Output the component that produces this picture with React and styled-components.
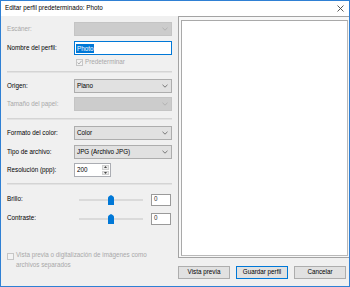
import React from 'react';
import styled, { createGlobalStyle } from 'styled-components';

const Global = createGlobalStyle`
  html, body { margin: 0; padding: 0; background: #ffffff; }
  body { font-family: "Liberation Sans", Arial, sans-serif; }
  * { box-sizing: border-box; }
`;

const Window = styled.div`
  width: 350px;
  height: 287px;
  border: 1px solid #2f80d4;
  display: flex;
  flex-direction: column;
  background: #f0f0f0;
  font-size: 6.3px;
  color: #000;
  overflow: hidden;
`;

const TitleBar = styled.div`
  height: 15px;
  flex: none;
  background: #ffffff;
  display: flex;
  align-items: center;
  justify-content: space-between;
  padding: 0 4px 0 4px;
`;

const Title = styled.span`
  line-height: 1;
  white-space: nowrap;
`;

const Body = styled.div`
  flex: 1;
  display: flex;
  min-height: 0;
`;

const LeftPane = styled.div`
  width: 172px;
  flex: none;
  padding: 0 1px 0 6px;
  display: flex;
  flex-direction: column;
`;

const Row = styled.div`
  display: grid;
  grid-template-columns: 67px 1fr;
  align-items: center;
  height: ${(p) => p.$h || 14}px;
  margin-top: ${(p) => p.$mt || 0}px;
`;

const Label = styled.span`
  color: ${(p) => (p.$disabled ? '#a8a8a8' : '#000')};
  white-space: nowrap;
  line-height: 1;
`;

const Select = styled.div`
  height: 14px;
  border: 1px solid ${(p) => (p.$disabled ? '#c4c4c4' : '#adadad')};
  background: ${(p) => (p.$disabled ? '#cccccc' : '#e1e1e1')};
  display: flex;
  align-items: center;
  justify-content: space-between;
  padding: 0 3px 0 2px;
  line-height: 1;
`;

const TextInput = styled.div`
  height: 14px;
  border: 1px solid #0078d7;
  background: #fff;
  display: flex;
  align-items: center;
  padding-left: 1px;
`;

const Selected = styled.span`
  background: #0078d7;
  color: #fff;
  line-height: 9px;
  padding: 0 1px;
`;

const CheckWrap = styled.div`
  display: flex;
  align-items: center;
  gap: 2px;
  margin-left: 2px;
  color: #a8a8a8;
  line-height: 1;
`;

const Box = styled.div`
  width: 7px;
  height: 7px;
  flex: none;
  border: 1px solid #c6c6c6;
  background: #f3f3f3;
  display: flex;
  align-items: center;
  justify-content: center;
  margin-top: ${(p) => p.$mt || 0}px;
`;

const Divider = styled.div`
  height: 2px;
  margin-top: ${(p) => p.$mt || 0}px;
  border-top: 1px solid #d4d4d4;
  border-bottom: 1px solid #e2e2e2;
`;

const Spin = styled.div`
  width: 37px;
  height: 14px;
  border: 1px solid #abadb3;
  background: #fff;
  display: flex;
  align-items: center;
  line-height: 1;
`;

const SpinText = styled.span`
  flex: 1;
  padding-left: 2px;
`;

const SpinButtons = styled.div`
  width: 7px;
  height: 10px;
  margin-right: 1px;
  display: flex;
  flex-direction: column;
  gap: 1px;
`;

const SpinButton = styled.div`
  flex: 1;
  background: #eaeaea;
  border: 1px solid #d0d0d0;
  display: flex;
  align-items: center;
  justify-content: center;
`;

const SliderLine = styled.div`
  display: flex;
  align-items: center;
`;

const Track = styled.div`
  position: relative;
  width: 64px;
  height: 12px;
  margin-left: 5px;
  display: flex;
  align-items: center;
`;

const TrackLine = styled.div`
  width: 100%;
  height: 2px;
  background: #dadada;
`;

const Thumb = styled.svg`
  position: absolute;
  left: 29px;
  top: 1px;
`;

const ValueBox = styled.div`
  width: 20px;
  height: 12px;
  margin-left: 8px;
  border: 1px solid #9a9a9a;
  background: #fff;
  display: flex;
  align-items: center;
  padding-left: 2px;
  color: #333;
  line-height: 1;
`;

const BottomCheck = styled.div`
  display: flex;
  align-items: flex-start;
  gap: 2px;
  margin-top: ${(p) => p.$mt || 0}px;
  color: #a8a8a8;
  line-height: 10px;
`;

const RightPane = styled.div`
  flex: 1;
  display: flex;
  flex-direction: column;
  padding: 0 2px 7px 5px;
`;

const Preview = styled.div`
  flex: 1;
  border: 1px solid #a3a3a3;
  background: #f8f8f8;
  padding: 3px 1px 1px 2px;
  display: flex;
`;

const PreviewInner = styled.div`
  flex: 1;
  border: 1px solid #b9b9b9;
  border-top-color: #a9a9a9;
  border-left-color: #a9a9a9;
  background: #ffffff;
`;

const ButtonRow = styled.div`
  display: flex;
  justify-content: flex-end;
  gap: 6px;
  margin-top: 8px;
  padding-right: 4px;
`;

const Button = styled.div`
  width: 52px;
  height: 13px;
  border: 1px solid ${(p) => (p.$primary ? '#0078d7' : '#adadad')};
  background: #e1e1e1;
  display: flex;
  align-items: center;
  justify-content: center;
  line-height: 1;
`;

const Chevron = ({ disabled }) => (
  <svg width="6" height="4" viewBox="0 0 6 4">
    <path d="M0.5 0.8 L3 3.2 L5.5 0.8" fill="none" stroke={disabled ? '#a9a9a9' : '#5c5c5c'} strokeWidth="0.8" />
  </svg>
);

const Check = () => (
  <svg width="5" height="5" viewBox="0 0 5 5">
    <path d="M0.5 2.6 L2 4 L4.6 0.8" fill="none" stroke="#a8a8a8" strokeWidth="0.9" />
  </svg>
);

const Tri = ({ up }) => (
  <svg width="3" height="2" viewBox="0 0 3 2">
    <path d={up ? 'M0 2 L1.5 0 L3 2 Z' : 'M0 0 L1.5 2 L3 0 Z'} fill="#444" />
  </svg>
);

const Slider = () => (
  <SliderLine>
    <Track>
      <TrackLine />
      <Thumb width="6" height="10" viewBox="0 0 6 10">
        <path d="M0 3 Q0 2 1 1.2 L3 0 L5 1.2 Q6 2 6 3 L6 10 L0 10 Z" fill="#0078d7" />
      </Thumb>
    </Track>
    <ValueBox>0</ValueBox>
  </SliderLine>
);

export default function App() {
  return (
    <>
      <Global />
      <Window>
        <TitleBar>
          <Title>Editar perfil predeterminado: Photo</Title>
          <svg width="7" height="7" viewBox="0 0 7 7" style={{ marginRight: 1 }}>
            <path d="M0.5 0.5 L6.5 6.5 M6.5 0.5 L0.5 6.5" stroke="#444" strokeWidth="0.9" />
          </svg>
        </TitleBar>
        <Body>
          <LeftPane>
            <Row $mt={6}>
              <Label $disabled>Escáner:</Label>
              <Select $disabled>
                <span />
                <Chevron disabled />
              </Select>
            </Row>
            <Row $mt={5}>
              <Label>Nombre del perfil:</Label>
              <TextInput>
                <Selected>Photo</Selected>
              </TextInput>
            </Row>
            <Row $mt={2} $h={10}>
              <span />
              <CheckWrap>
                <Box>
                  <Check />
                </Box>
                <span>Predeterminar</span>
              </CheckWrap>
            </Row>
            <Divider $mt={4} />
            <Row $mt={6}>
              <Label>Origen:</Label>
              <Select>
                <span>Plano</span>
                <Chevron />
              </Select>
            </Row>
            <Row $mt={4}>
              <Label $disabled>Tamaño del papel:</Label>
              <Select $disabled>
                <span />
                <Chevron disabled />
              </Select>
            </Row>
            <Divider $mt={7} />
            <Row $mt={6}>
              <Label>Formato del color:</Label>
              <Select>
                <span>Color</span>
                <Chevron />
              </Select>
            </Row>
            <Row $mt={5}>
              <Label>Tipo de archivo:</Label>
              <Select>
                <span>JPG (Archivo JPG)</span>
                <Chevron />
              </Select>
            </Row>
            <Row $mt={4}>
              <Label>Resolución (ppp):</Label>
              <Spin>
                <SpinText>200</SpinText>
                <SpinButtons>
                  <SpinButton>
                    <Tri up />
                  </SpinButton>
                  <SpinButton>
                    <Tri />
                  </SpinButton>
                </SpinButtons>
              </Spin>
            </Row>
            <Divider $mt={6} />
            <Row $mt={8} $h={13}>
              <Label>Brillo:</Label>
              <Slider />
            </Row>
            <Row $mt={6} $h={13}>
              <Label>Contraste:</Label>
              <Slider />
            </Row>
            <BottomCheck $mt={25}>
              <Box $mt={3} />
              <span>
                Vista previa o digitalización de imágenes como
                <br />
                archivos separados
              </span>
            </BottomCheck>
          </LeftPane>
          <RightPane>
            <Preview>
              <PreviewInner />
            </Preview>
            <ButtonRow>
              <Button>Vista previa</Button>
              <Button $primary>Guardar perfil</Button>
              <Button>Cancelar</Button>
            </ButtonRow>
          </RightPane>
        </Body>
      </Window>
    </>
  );
}
